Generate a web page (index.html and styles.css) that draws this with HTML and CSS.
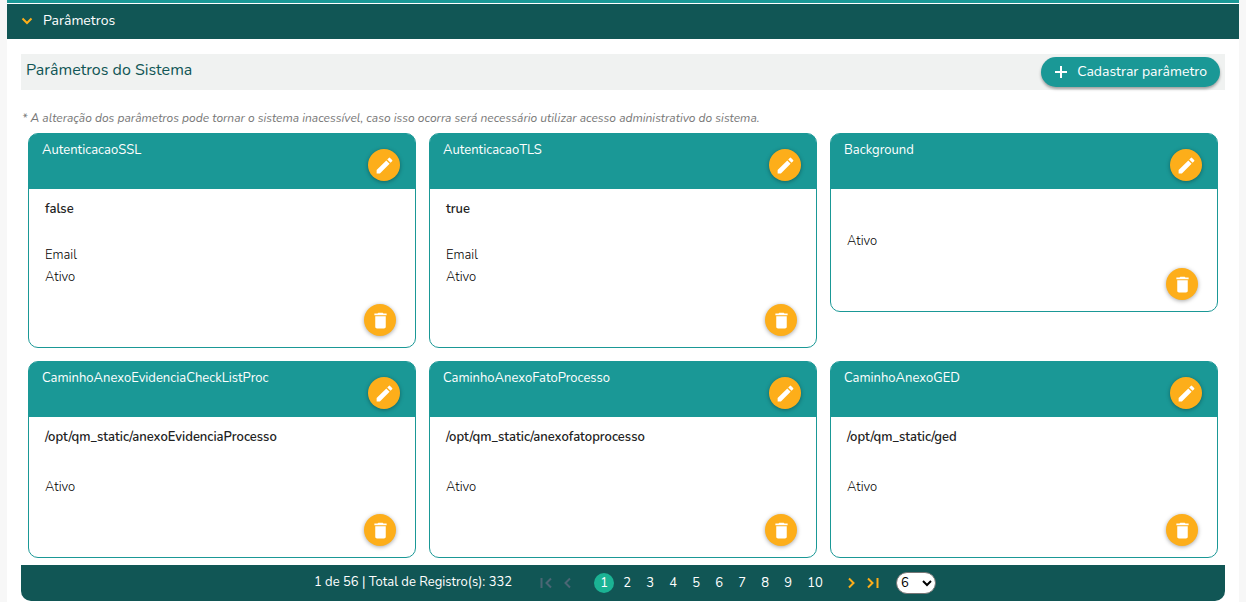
FILE: index.html
```html
<!DOCTYPE html>
<html lang="pt-BR">
<head>
<meta charset="utf-8">
<meta name="viewport" content="width=device-width, initial-scale=1">
<title>Parâmetros do Sistema</title>
<link rel="stylesheet" href="styles.css">
</head>
<body>
<svg class="sprite" aria-hidden="true">
  <symbol id="edit" viewBox="0 0 24 24"><path d="M3 17.25V21h3.75L17.81 9.94l-3.75-3.75L3 17.25zM20.71 7.04a1 1 0 0 0 0-1.41l-2.34-2.34a1 1 0 0 0-1.41 0l-1.83 1.83 3.75 3.75 1.83-1.83z"/></symbol>
  <symbol id="trash" viewBox="0 0 24 24"><path d="M6 19c0 1.1.9 2 2 2h8c1.100 0 2-.9 2-2V7H6v12zM19 4h-3.500l-1-1h-5l-1 1H5v2h14V4z"/></symbol>
</svg>
<main class="panel">
  <button class="panel-head" type="button" aria-expanded="true">
    <svg class="chevron" viewBox="0 0 12 8"><path d="M1.500 1.500L6 6l4.500-4.500"/></svg>
    Parâmetros
  </button>
  <div class="content">
    <header class="toolbar">
      <h1 class="title">Parâmetros do Sistema</h1>
      <button class="add" type="button">
        <svg class="plus" viewBox="0 0 14 14"><path d="M7 1v12M1 7h12"/></svg>
        Cadastrar parâmetro
      </button>
    </header>
    <p class="note">* A alteração dos parâmetros pode tornar o sistema inacessível, caso isso ocorra será necessário utilizar acesso administrativo do sistema.</p>
    <section class="cards">
      <article class="card">
        <header class="card-head"><h2 class="name">AutenticacaoSSL</h2><button class="round" type="button" aria-label="Editar"><svg class="icon"><use href="#edit"/></svg></button></header>
        <div class="card-body"><p class="value">false</p><p class="meta">Email</p><p class="meta">Ativo</p><button class="round remove" type="button" aria-label="Excluir"><svg class="icon"><use href="#trash"/></svg></button></div>
      </article>
      <article class="card">
        <header class="card-head"><h2 class="name">AutenticacaoTLS</h2><button class="round" type="button" aria-label="Editar"><svg class="icon"><use href="#edit"/></svg></button></header>
        <div class="card-body"><p class="value">true</p><p class="meta">Email</p><p class="meta">Ativo</p><button class="round remove" type="button" aria-label="Excluir"><svg class="icon"><use href="#trash"/></svg></button></div>
      </article>
      <article class="card">
        <header class="card-head"><h2 class="name">Background</h2><button class="round" type="button" aria-label="Editar"><svg class="icon"><use href="#edit"/></svg></button></header>
        <div class="card-body"><p class="value"></p><p class="meta"></p><p class="meta">Ativo</p><button class="round remove" type="button" aria-label="Excluir"><svg class="icon"><use href="#trash"/></svg></button></div>
      </article>
      <article class="card">
        <header class="card-head"><h2 class="name">CaminhoAnexoEvidenciaCheckListProc</h2><button class="round" type="button" aria-label="Editar"><svg class="icon"><use href="#edit"/></svg></button></header>
        <div class="card-body"><p class="value">/opt/qm_static/anexoEvidenciaProcesso</p><p class="meta"></p><p class="meta">Ativo</p><button class="round remove" type="button" aria-label="Excluir"><svg class="icon"><use href="#trash"/></svg></button></div>
      </article>
      <article class="card">
        <header class="card-head"><h2 class="name">CaminhoAnexoFatoProcesso</h2><button class="round" type="button" aria-label="Editar"><svg class="icon"><use href="#edit"/></svg></button></header>
        <div class="card-body"><p class="value">/opt/qm_static/anexofatoprocesso</p><p class="meta"></p><p class="meta">Ativo</p><button class="round remove" type="button" aria-label="Excluir"><svg class="icon"><use href="#trash"/></svg></button></div>
      </article>
      <article class="card">
        <header class="card-head"><h2 class="name">CaminhoAnexoGED</h2><button class="round" type="button" aria-label="Editar"><svg class="icon"><use href="#edit"/></svg></button></header>
        <div class="card-body"><p class="value">/opt/qm_static/ged</p><p class="meta"></p><p class="meta">Ativo</p><button class="round remove" type="button" aria-label="Excluir"><svg class="icon"><use href="#trash"/></svg></button></div>
      </article>
    </section>
    <nav class="pager" aria-label="Paginação">
      <span class="summary">1 de 56 | Total de Registro(s): 332</span>
      <span class="steps">
        <button class="step" type="button" disabled aria-label="Primeira"><svg class="arrow" viewBox="0 0 12 12"><path d="M1.500 1v10M11 1.500L6.500 6l4.500 4.500"/></svg></button>
        <button class="step" type="button" disabled aria-label="Anterior"><svg class="arrow" viewBox="0 0 12 12"><path d="M8 1.500L3.500 6 8 10.500"/></svg></button>
      </span>
      <span class="pages">
        <button class="page current" type="button" aria-current="page">1</button>
        <button class="page" type="button">2</button>
        <button class="page" type="button">3</button>
        <button class="page" type="button">4</button>
        <button class="page" type="button">5</button>
        <button class="page" type="button">6</button>
        <button class="page" type="button">7</button>
        <button class="page" type="button">8</button>
        <button class="page" type="button">9</button>
        <button class="page wide" type="button">10</button>
      </span>
      <span class="steps">
        <button class="step" type="button" aria-label="Próxima"><svg class="arrow" viewBox="0 0 12 12"><path d="M4 1.500L8.500 6 4 10.500"/></svg></button>
        <button class="step" type="button" aria-label="Última"><svg class="arrow" viewBox="0 0 12 12"><path d="M10.500 1v10M1 1.500L5.500 6 1 10.500"/></svg></button>
      </span>
      <select class="size" aria-label="Registros por página"><option>6</option><option>12</option><option>24</option></select>
    </nav>
  </div>
</main>
</body>
</html>
```
FILE: styles.css
```css
* { box-sizing: border-box; }
body {
  margin: 0;
  padding: 0 7px;
  background: #f7f7f7;
  color: #212121;
  font: 13px/18px Nunito, Lato, sans-serif;
}
h1, h2, p { margin: 0; font-weight: 400; }
button, select { font: inherit; cursor: pointer; }
button { border: 0; padding: 0; background: none; }
.sprite { display: none; }

.panel { background: #fff; border-top: 3px solid #1a9896; padding-top: 1px; }
.panel-head {
  display: flex;
  align-items: center;
  gap: 10px;
  width: 100%;
  height: 35px;
  padding: 0 14px 2px;
  background: #115655;
  color: #fff;
  font-size: 14px;
}
.chevron { width: 12px; height: 8px; fill: none; stroke: #fdae1a; stroke-width: 2; }
.content { padding: 15px 14px 1px; }

.toolbar {
  display: flex;
  align-items: center;
  justify-content: space-between;
  height: 36px;
  padding: 0 5px;
  background: #f0f2f1;
}
.title { padding-bottom: 4px; color: #115655; font-size: 16px; }
.add {
  display: flex;
  align-items: center;
  gap: 9px;
  height: 30px;
  padding: 0 13px;
  border-radius: 15px;
  background: #1a9896;
  color: #fff;
  font-size: 14px;
  box-shadow: 0 2px 3px rgba(0, 0, 0, .35);
}
.plus { width: 14px; height: 14px; fill: none; stroke: #fff; stroke-width: 2; }
.note { margin: 19px 1px 6px; color: #777; font-size: 12px; font-style: italic; }

.cards {
  display: grid;
  grid-template-columns: repeat(3, 1fr);
  align-items: start;
  gap: 13px;
  padding: 0 7px 7px;
}
.card { border: 1px solid #1a9896; border-radius: 10px; background: #fff; }
.card-head {
  display: flex;
  justify-content: space-between;
  align-items: flex-start;
  height: 55px;
  padding: 7px 15px 0 13px;
  border-radius: 8px 8px 0 0;
  background: #1a9896;
  color: #fff;
}
.card-head .round { margin-top: 8px; }
.name { font-size: 13px; }
.card-body { display: flex; flex-direction: column; padding: 11px 19px 11px 16px; }
.value { margin-bottom: 25px; font-weight: 600; }
.meta { padding: 3px 0 1px; color: #000; font-weight: 300; }
.round {
  display: flex;
  align-items: center;
  justify-content: center;
  flex: none;
  width: 32px;
  height: 32px;
  border-radius: 50%;
  background: #fdae1a;
  box-shadow: 0 1px 4px rgba(0, 0, 0, .35);
}
.remove { align-self: flex-end; margin-top: 17px; }
.icon { width: 21px; height: 21px; fill: #fff; }

.pager {
  display: flex;
  align-items: center;
  justify-content: center;
  height: 36px;
  padding: 0 0 0 4px;
  border-radius: 0 0 10px 10px;
  background: #115655;
  color: #fff;
}
.summary { padding-bottom: 2px; }
.steps { display: flex; gap: 10px; color: #fdae1a; }
.summary + .steps { margin: 0 20px 0 28px; }
.step { color: inherit; }
.step:disabled { color: #4b6674; cursor: default; }
.arrow { display: block; width: 12px; height: 12px; fill: none; stroke: currentColor; stroke-width: 2; }
.pages { display: flex; gap: 3px; margin-right: 16px; }
.page { width: 20px; height: 20px; border-radius: 50%; color: #fff; font-size: 13px; }
.wide { width: 28px; }
.current { background: #1bb394; }
.size { width: 40px; height: 22px; margin-left: 17px; border: 1px solid #767676; border-radius: 11px; background: #fff; color: #000; }
```
